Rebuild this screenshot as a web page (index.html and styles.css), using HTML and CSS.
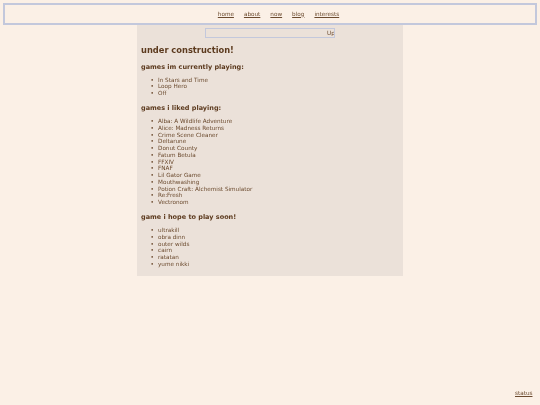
FILE: index.html
```html
<!DOCTYPE html>
<html lang="en">
<head>
<meta charset="utf-8">
<title>interests</title>
<link rel="stylesheet" href="styles.css">
</head>
<body>
<nav class="nav">
  <a href="#">home</a>
  <a href="#">about</a>
  <a href="#">now</a>
  <a href="#">blog</a>
  <a href="#">interests</a>
</nav>
<main class="content">
  <div class="ticker"><span class="ticker-text">Up</span></div>
  <h1>under construction!</h1>
  <h2>games im currently playing:</h2>
  <ul>
    <li>In Stars and Time</li>
    <li>Loop Hero</li>
    <li>Off</li>
  </ul>
  <h2>games i liked playing:</h2>
  <ul>
    <li>Alba: A Wildlife Adventure</li>
    <li>Alice: Madness Returns</li>
    <li>Crime Scene Cleaner</li>
    <li>Deltarune</li>
    <li>Donut County</li>
    <li>Fatum Betula</li>
    <li>FFXIV</li>
    <li>FNAF</li>
    <li>Lil Gator Game</li>
    <li>Mouthwashing</li>
    <li>Potion Craft: Alchemist Simulator</li>
    <li>Re:Fresh</li>
    <li>Vectronom</li>
  </ul>
  <h2>game i hope to play soon!</h2>
  <ul>
    <li>ultrakill</li>
    <li>obra dinn</li>
    <li>outer wilds</li>
    <li>cairn</li>
    <li>ratatan</li>
    <li>yume nikki</li>
  </ul>
</main>
<a class="status" href="#">status</a>
</body>
</html>
```
FILE: styles.css
```css
html, body {
  margin: 0;
  height: 405px;
  overflow: hidden;
}
html {
  background: #fbf0e6;
}
body {
  color: #6b4a2e;
  font-family: "DejaVu Sans", sans-serif;
  font-size: 5.7px;
  line-height: 6.75px;
  position: relative;
}
a {
  color: #6b4a2e;
}
.nav {
  box-sizing: border-box;
  margin: 3px 3px 0;
  height: 22px;
  padding: 0 0 0 17px;
  border: 2px solid #c3c8dc;
  display: flex;
  justify-content: center;
  align-items: center;
  gap: 10px;
  will-change: transform;
}
.content {
  box-sizing: border-box;
  width: 266px;
  height: 251px;
  margin: 0 auto;
  padding: 3px 4px 0;
  background: #ebe1d9;
  will-change: transform;
}
.ticker {
  box-sizing: border-box;
  width: 130px;
  height: 10px;
  margin: 0 auto;
  border: 1px solid #c3c8dc;
  overflow: hidden;
  display: flex;
  justify-content: flex-end;
  align-items: center;
}
.ticker-text {
  width: 7px;
  overflow: hidden;
  white-space: nowrap;
  flex: none;
}
h1 {
  font-size: 8.3px;
  line-height: 10.5px;
  margin: 6.75px 0 0;
  color: #5c3a1e;
}
h2 {
  font-size: 6.5px;
  line-height: 8px;
  margin: 7.25px 0 0;
  color: #5c3a1e;
}
ul {
  margin: 6px 0 0;
  padding: 0 0 0 17px;
  list-style: none;
}
li::before {
  content: "•";
  display: inline-block;
  width: 7.5px;
  margin-left: -7.5px;
}
.status {
  position: absolute;
  right: 8px;
  bottom: 8px;
  will-change: transform;
}
```
